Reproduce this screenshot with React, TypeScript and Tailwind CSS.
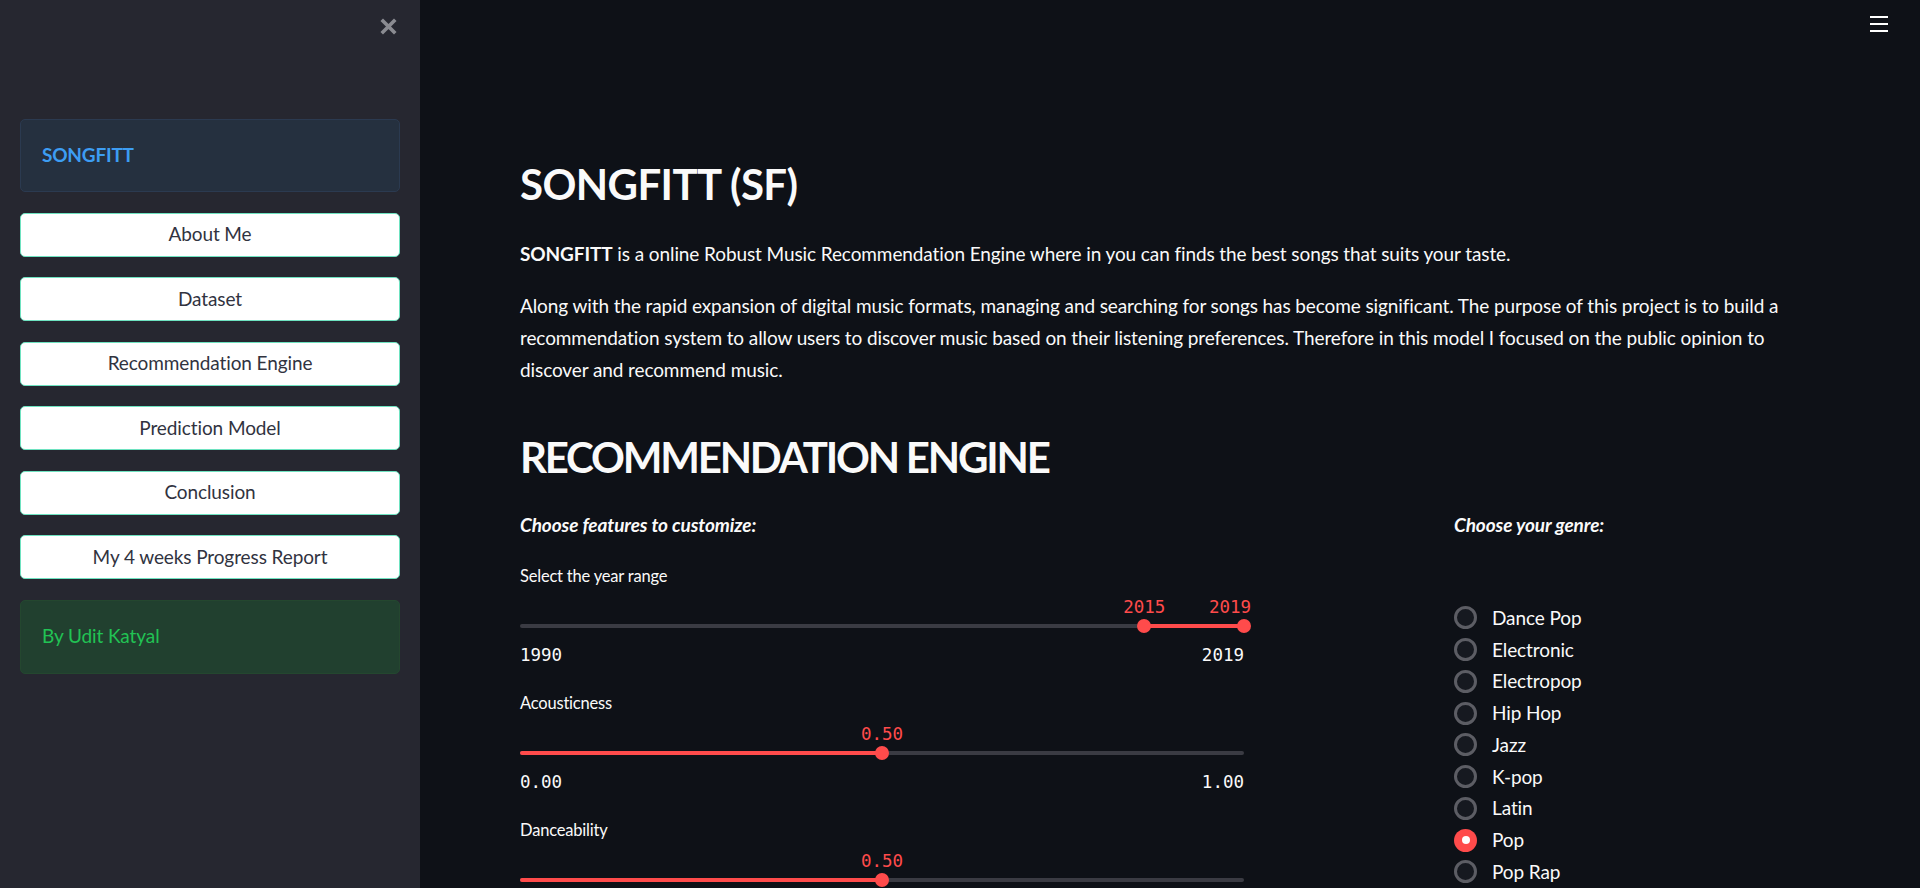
import React from "react";

const W = 724;

type SliderProps = {
  label: string;
  min: number;
  max: number;
  values: number[];
  fmt: (v: number) => string;
};

function Slider({ label, min, max, values, fmt }: SliderProps) {
  const pos = (v: number) => ((v - min) / (max - min)) * W;
  const isRange = values.length > 1;
  const a = isRange ? pos(values[0]) : 0;
  const b = isRange ? pos(values[1]) : pos(values[0]);
  const labelLeft = (v: number) => {
    const t = fmt(v);
    const lw = t.length * 10.5;
    let l = pos(v) - lw / 2;
    if (l + lw > W + 7) l = W + 7 - lw;
    if (l < -7) l = -7;
    return l;
  };
  return (
    <div className="mb-[24px] w-[724px]">
      <div className="text-[16.5px] leading-[24px] mb-[7px] tracking-[-0.2px]">{label}</div>
      <div className="relative h-[24px] font-['DejaVu_Sans_Mono',monospace] text-[17.5px] leading-[24px] text-[#ff4b4b]">
        {values.map((v) => (
          <span key={v} className="absolute top-0 whitespace-nowrap" style={{ left: labelLeft(v) }}>
            {fmt(v)}
          </span>
        ))}
      </div>
      <div className="relative h-[14px]">
        <div className="absolute left-0 right-0 top-[5px] h-[4px] rounded-full bg-[#3a3b43]" />
        <div className="absolute top-[5px] h-[4px] rounded-full bg-[#ff4b4b]" style={{ left: a, width: b - a }} />
        {values.map((v) => (
          <div
            key={v}
            className="absolute top-0 h-[14px] w-[14px] -translate-x-1/2 rounded-full bg-[#ff4b4b]"
            style={{ left: pos(v) }}
          />
        ))}
      </div>
      <div className="mt-[10px] flex justify-between font-['DejaVu_Sans_Mono',monospace] text-[17.5px] leading-[24px] text-[#fafafa]">
        <span>{fmt(min)}</span>
        <span>{fmt(max)}</span>
      </div>
    </div>
  );
}

const genres = ["Dance Pop", "Electronic", "Electropop", "Hip Hop", "Jazz", "K-pop", "Latin", "Pop", "Pop Rap"];

const navItems = ["About Me", "Dataset", "Recommendation Engine", "Prediction Model", "Conclusion", "My 4 weeks Progress Report"];

export default function App() {
  return (
    <div className="flex h-[888px] w-[1920px] overflow-hidden font-['Lato',sans-serif]">
      <aside className="flex h-full w-[420px] shrink-0 flex-col bg-[#262730] px-5">
        <div className="flex justify-end pr-[3px] pt-[18px]">
          <svg width="17" height="17" viewBox="0 0 17 17">
            <path d="M3 3 L14 14 M14 3 L3 14" stroke="#8a8b91" strokeWidth="3.6" strokeLinecap="square" />
          </svg>
        </div>
        <div className="mt-[84px] flex h-[73px] items-center rounded-[5px] border border-[#2b3a50] bg-[#25303f] pl-[21px] text-[19px] font-bold tracking-[-0.2px] text-[#3d9df3]">
          SONGFITT
        </div>
        <div className="mt-[20.5px] flex flex-col gap-[20.5px]">
          {navItems.map((n) => (
            <div
              key={n}
              className="flex h-[44px] items-center justify-center rounded-[5px] border border-[#6ee2c0] bg-white text-[19px] tracking-[-0.1px] text-[#31333f]"
            >
              {n}
            </div>
          ))}
          <div className="flex h-[74px] items-center rounded-[5px] border border-[#24472f] bg-[#21402f] pl-[21px] text-[19px] tracking-[-0.1px] text-[#21c354]">
            By Udit Katyal
          </div>
        </div>
      </aside>

      <main className="flex h-full flex-1 flex-col overflow-hidden bg-[#0e1117] text-[#fafafa]">
        <div className="flex justify-end pr-[32px] pt-[16px]">
          <div className="flex w-[18px] flex-col gap-[5px]">
            <div className="h-[2px] bg-white" />
            <div className="h-[2px] bg-white" />
            <div className="h-[2px] bg-white" />
          </div>
        </div>
        <div className="pl-[100px]">
          <h1 className="mt-[127px] text-[42px] font-bold leading-[50px] tracking-[-0.6px]">SONGFITT (SF)</h1>
          <p className="mt-[29px] whitespace-nowrap text-[19px] leading-[32px] tracking-[-0.1px]">
            <b>SONGFITT</b> is a online Robust Music Recommendation Engine where in you can finds the best songs that suits your taste.
          </p>
          <p className="mt-[20px] text-[19px] leading-[32px] tracking-[-0.1px]">
            <span className="block whitespace-nowrap">
              Along with the rapid expansion of digital music formats, managing and searching for songs has become significant. The purpose of this project is to build a
            </span>
            <span className="block whitespace-nowrap">
              recommendation system to allow users to discover music based on their listening preferences. Therefore in this model I focused on the public opinion to
            </span>
            <span className="block whitespace-nowrap">discover and recommend music.</span>
          </p>
          <h1 className="mt-[46px] text-[42px] font-bold leading-[50px] tracking-[-2.2px]">RECOMMENDATION ENGINE</h1>
          <div className="mt-[27px] flex">
            <div className="w-[724px]">
              <div className="text-[19px] font-bold italic leading-[32px] tracking-[-0.1px]">Choose features to customize:</div>
              <div className="mt-[23px]">
                <Slider label="Select the year range" min={1990} max={2019} values={[2015, 2019]} fmt={(v) => String(v)} />
                <Slider label="Acousticness" min={0} max={1} values={[0.5]} fmt={(v) => v.toFixed(2)} />
                <Slider label="Danceability" min={0} max={1} values={[0.5]} fmt={(v) => v.toFixed(2)} />
              </div>
            </div>
            <div className="ml-[210px]">
              <div className="text-[19px] font-bold italic leading-[32px] tracking-[-0.1px]">Choose your genre:</div>
              <div className="mt-[61px] flex flex-col">
                {genres.map((g) => (
                  <div key={g} className="flex h-[31.75px] items-center">
                    {g === "Pop" ? (
                      <div className="flex h-[23px] w-[23px] items-center justify-center rounded-full bg-[#ff4b4b]">
                        <div className="h-[8px] w-[8px] rounded-full bg-white" />
                      </div>
                    ) : (
                      <div className="h-[23px] w-[23px] rounded-full border-[3px] border-[#5c5d64] bg-[#161920]" />
                    )}
                    <span className="ml-[15px] text-[19px] leading-[24px] tracking-[-0.1px]">{g}</span>
                  </div>
                ))}
              </div>
            </div>
          </div>
        </div>
      </main>
    </div>
  );
}
